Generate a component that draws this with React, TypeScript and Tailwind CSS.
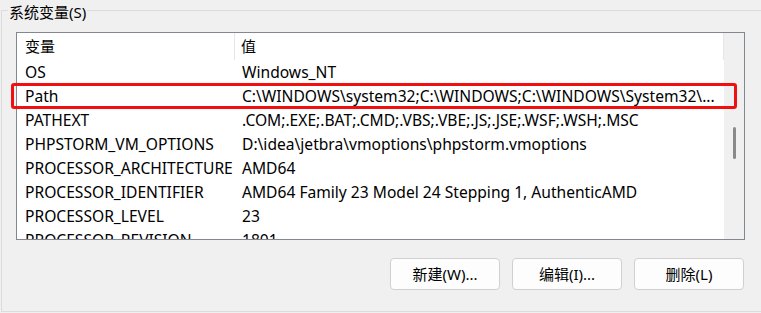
import React from "react";

const rows: [string, string][] = [
  ["OS", "Windows_NT"],
  ["Path", "C:\\WINDOWS\\system32;C:\\WINDOWS;C:\\WINDOWS\\System32\\..."],
  ["PATHEXT", ".COM;.EXE;.BAT;.CMD;.VBS;.VBE;.JS;.JSE;.WSF;.WSH;.MSC"],
  ["PHPSTORM_VM_OPTIONS", "D:\\idea\\jetbra\\vmoptions\\phpstorm.vmoptions"],
  ["PROCESSOR_ARCHITECTURE", "AMD64"],
  ["PROCESSOR_IDENTIFIER", "AMD64 Family 23 Model 24 Stepping 1, AuthenticAMD"],
  ["PROCESSOR_LEVEL", "23"],
  ["PROCESSOR_REVISION", "1801"],
];

const font = "font-['Segoe_UI','Noto_Sans','Noto_Sans_CJK_SC',sans-serif]";

export default function App() {
  return (
    <div className={`relative w-[761px] h-[313px] overflow-hidden bg-[#f0f0f0] text-[15px] text-black ${font}`}>
      <div className="mt-[10px] ml-[1px] h-[302px] border border-r-0 border-[#dcdcdc] flex flex-col">
        <div className="ml-[14px] mt-[21px] w-[729px] h-[208px] border border-[#828790] bg-white flex overflow-hidden">
          <div className="flex-1 flex flex-col overflow-hidden text-[15.6px]">
            <div className="flex h-[27px] shrink-0 items-center text-[15px]">
              <div className="w-[218px] pl-[8px] flex items-center h-full border-r border-[#e5e5e5]">变量</div>
              <div className="flex-1 pl-[6px] flex items-center h-full border-r border-[#e5e5e5]">值</div>
            </div>
            {rows.map(([k, v]) => (
              <div key={k} className="flex h-[24px] shrink-0 items-center whitespace-nowrap leading-[22px]">
                <div className="w-[218px] pl-[8px] overflow-hidden">{k}</div>
                <div className="flex-1 pl-[7px] overflow-hidden">{v}</div>
              </div>
            ))}
          </div>
          <div className="w-[20px] shrink-0 bg-[#f0f0f0] relative">
            <div className="absolute left-[9px] top-[94px] w-[3px] h-[32px] rounded-full bg-[#8a8a8a]" />
          </div>
        </div>
        <div className="flex justify-end gap-[12px] mt-[18px] mr-[17px]">
          {["新建(W)...", "编辑(I)...", "删除(L)"].map((t) => (
            <button
              key={t}
              className="w-[110px] h-[32px] rounded-[4px] border border-[#d0d0d0] bg-[#fdfdfd] flex items-center justify-center text-[15px]"
            >
              {t}
            </button>
          ))}
        </div>
      </div>
      <div className="absolute left-[8px] top-[2px] px-[1px] bg-[#f0f0f0] leading-[20px]">系统变量(S)</div>
      <div className="absolute left-[11px] top-[83px] w-[726px] h-[26px] border-[3px] border-[#f01010] rounded-[3px]" />
    </div>
  );
}
